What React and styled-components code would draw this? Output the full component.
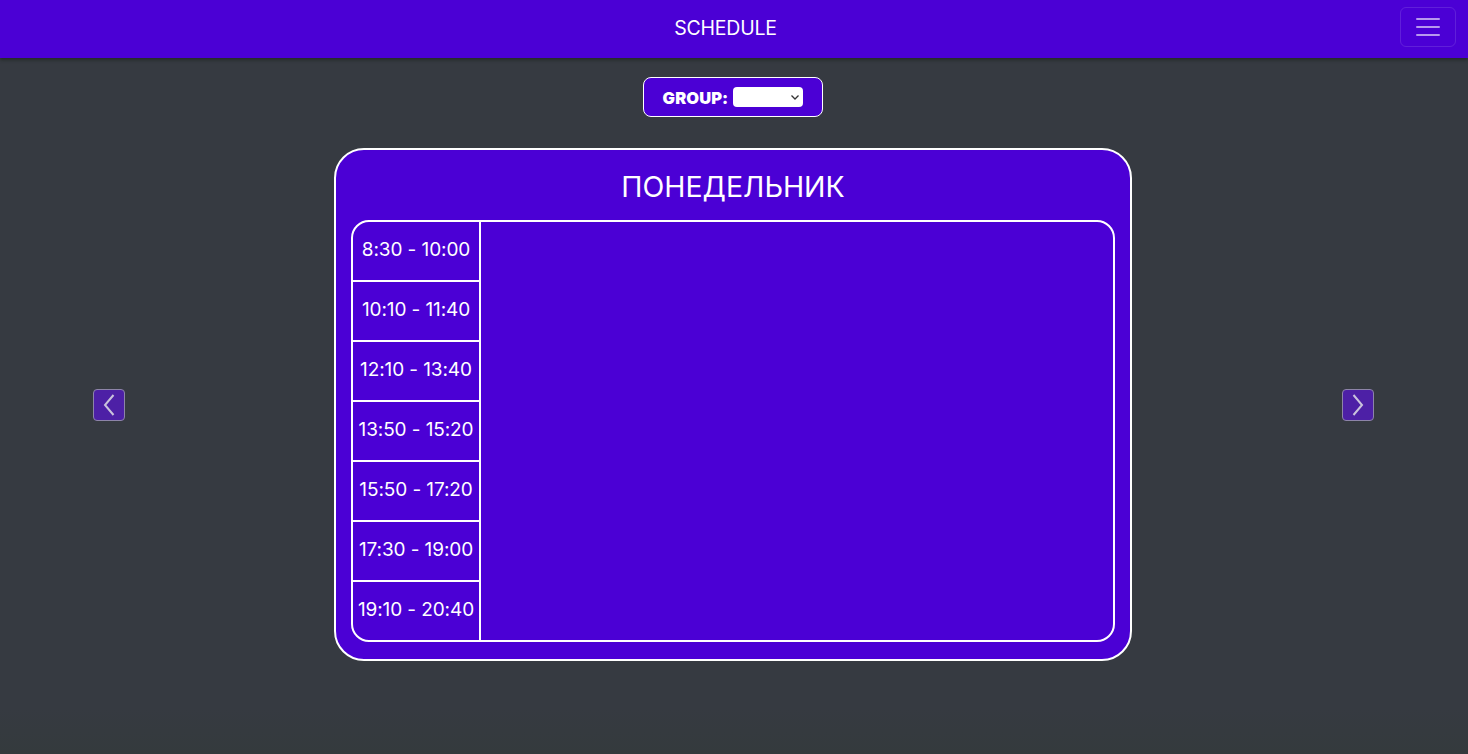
import React from "react";
import styled, { createGlobalStyle } from "styled-components";

const GlobalStyle = createGlobalStyle`
  html, body { margin: 0; padding: 0; }
  body {
    background: #363a41;
    font-family: Inter, "Noto Sans", "DejaVu Sans", sans-serif;
    color: #fff;
    min-height: 754px;
  }
`;

const Page = styled.div`
  min-height: 754px;
  width: 1468px;
  display: flex;
  flex-direction: column;
  background: linear-gradient(180deg, #363a41 0%, #363a41 94%, #343a3d 100%);
`;

const Header = styled.header`
  height: 58px;
  background: #4b00d5;
  display: flex;
  align-items: center;
  padding: 0 12px 0 51px;
  box-shadow: 0 2px 3px rgba(20, 30, 20, 0.55);
  position: relative;
  z-index: 1;
`;

const Brand = styled.div`
  flex: 1;
  text-align: center;
  font-size: 19.5px;
  font-weight: 400;
  letter-spacing: -0.2px;
  color: #fff;
  padding-bottom: 2px;
`;

const Toggler = styled.button`
  width: 56px;
  height: 40px;
  margin-top: -4px;
  border: 1px solid rgba(255, 255, 255, 0.12);
  border-radius: 6px;
  background: transparent;
  display: flex;
  flex-direction: column;
  align-items: center;
  justify-content: center;
  gap: 6px;
  padding: 0;
`;

const Bar = styled.span`
  display: block;
  width: 24px;
  height: 2px;
  border-radius: 1px;
  background: rgba(255, 255, 255, 0.6);
`;

const Main = styled.main`
  display: flex;
  flex-direction: column;
  align-items: center;
  padding-top: 19px;
`;

const GroupBox = styled.div`
  width: 180px;
  height: 40px;
  box-sizing: border-box;
  border: 1px solid #fff;
  border-radius: 8px;
  background: #4b00d5;
  display: flex;
  align-items: center;
  justify-content: center;
  gap: 5px;
  margin-left: -2px;
`;

const GroupLabel = styled.label`
  font-family: Inter, "DejaVu Sans", sans-serif;
  font-weight: 900;
  font-size: 16.5px;
  letter-spacing: 0.1px;
  color: #fff;
  padding-top: 1px;
`;

const SelectWrap = styled.div`
  position: relative;
  width: 70px;
  height: 20px;
`;

const Select = styled.select`
  appearance: none;
  -webkit-appearance: none;
  width: 70px;
  height: 20px;
  border: none;
  border-radius: 4px;
  background: #fff;
  padding: 0 4px;
  font-size: 12px;
  display: block;
  outline: none;
`;

const Caret = styled.svg`
  position: absolute;
  right: 3px;
  top: 6px;
  pointer-events: none;
`;

const Stage = styled.div`
  display: flex;
  align-items: center;
  padding-left: 93px;
  margin-top: 31px;
  align-self: stretch;
`;

const NavButton = styled.button`
  flex-shrink: 0;
  width: 32px;
  height: 32px;
  box-sizing: border-box;
  padding: 0;
  margin: ${(p) => (p.$side === "left" ? "0 209px 0 0" : "0 0 0 210px")};
  border: 1px solid #8d84a8;
  border-radius: 4px;
  background: #4d20a6;
  display: flex;
  align-items: center;
  justify-content: center;
`;

const Card = styled.section`
  flex: 0 0 798px;
  width: 798px;
  height: 513px;
  box-sizing: border-box;
  border: 2px solid #fff;
  border-radius: 30px;
  background: #4b00d5;
  padding: 0 15px;
  display: flex;
  flex-direction: column;
`;

const DayTitle = styled.h2`
  margin: 0;
  height: 70px;
  display: flex;
  align-items: center;
  justify-content: center;
  font-size: 28.5px;
  font-weight: 400;
  padding-top: 3px;
  box-sizing: border-box;
  color: #fff;
`;

const Table = styled.div`
  border: 2px solid #fff;
  border-radius: 18px;
  overflow: hidden;
  display: grid;
  grid-template-columns: 128px 1fr;
`;

const TimeCol = styled.div`
  display: flex;
  flex-direction: column;
  border-right: 2px solid #fff;
`;

const TimeCell = styled.div`
  height: 55px;
  padding-bottom: 3px;
  display: flex;
  align-items: center;
  justify-content: center;
  font-size: 19px;
  letter-spacing: -0.1px;
  color: #fff;
  border-bottom: ${(p) => (p.$last ? "none" : "2px solid #fff")};
`;

const LessonsCol = styled.div``;

const times = [
  "8:30 - 10:00",
  "10:10 - 11:40",
  "12:10 - 13:40",
  "13:50 - 15:20",
  "15:50 - 17:20",
  "17:30 - 19:00",
  "19:10 - 20:40",
];

export default function App() {
  return (
    <>
      <GlobalStyle />
      <Page>
        <Header>
          <Brand>SCHEDULE</Brand>
          <Toggler aria-label="menu">
            <Bar />
            <Bar />
            <Bar />
          </Toggler>
        </Header>
        <Main>
          <GroupBox>
            <GroupLabel>GROUP:</GroupLabel>
            <SelectWrap>
              <Select defaultValue="">
                <option value=""></option>
              </Select>
              <Caret width="10" height="8" viewBox="0 0 10 8">
                <path d="M1.5 2.5 L5 6 L8.5 2.5" fill="none" stroke="#333" strokeWidth="1.3" />
              </Caret>
            </SelectWrap>
          </GroupBox>
          <Stage>
            <NavButton $side="left" aria-label="previous">
              <svg width="16" height="24" viewBox="0 0 16 24">
                <path d="M12.5 2 L4 12 L12.5 22" fill="none" stroke="#c9c2dc" strokeWidth="2" />
              </svg>
            </NavButton>
            <Card>
              <DayTitle>ПОНЕДЕЛЬНИК</DayTitle>
              <Table>
                <TimeCol>
                  {times.map((t, i) => (
                    <TimeCell key={t} $last={i === times.length - 1}>
                      {t}
                    </TimeCell>
                  ))}
                </TimeCol>
                <LessonsCol />
              </Table>
            </Card>
            <NavButton $side="right" aria-label="next">
              <svg width="16" height="24" viewBox="0 0 16 24">
                <path d="M3.5 2 L12 12 L3.5 22" fill="none" stroke="#c9c2dc" strokeWidth="2" />
              </svg>
            </NavButton>
          </Stage>
        </Main>
      </Page>
    </>
  );
}
